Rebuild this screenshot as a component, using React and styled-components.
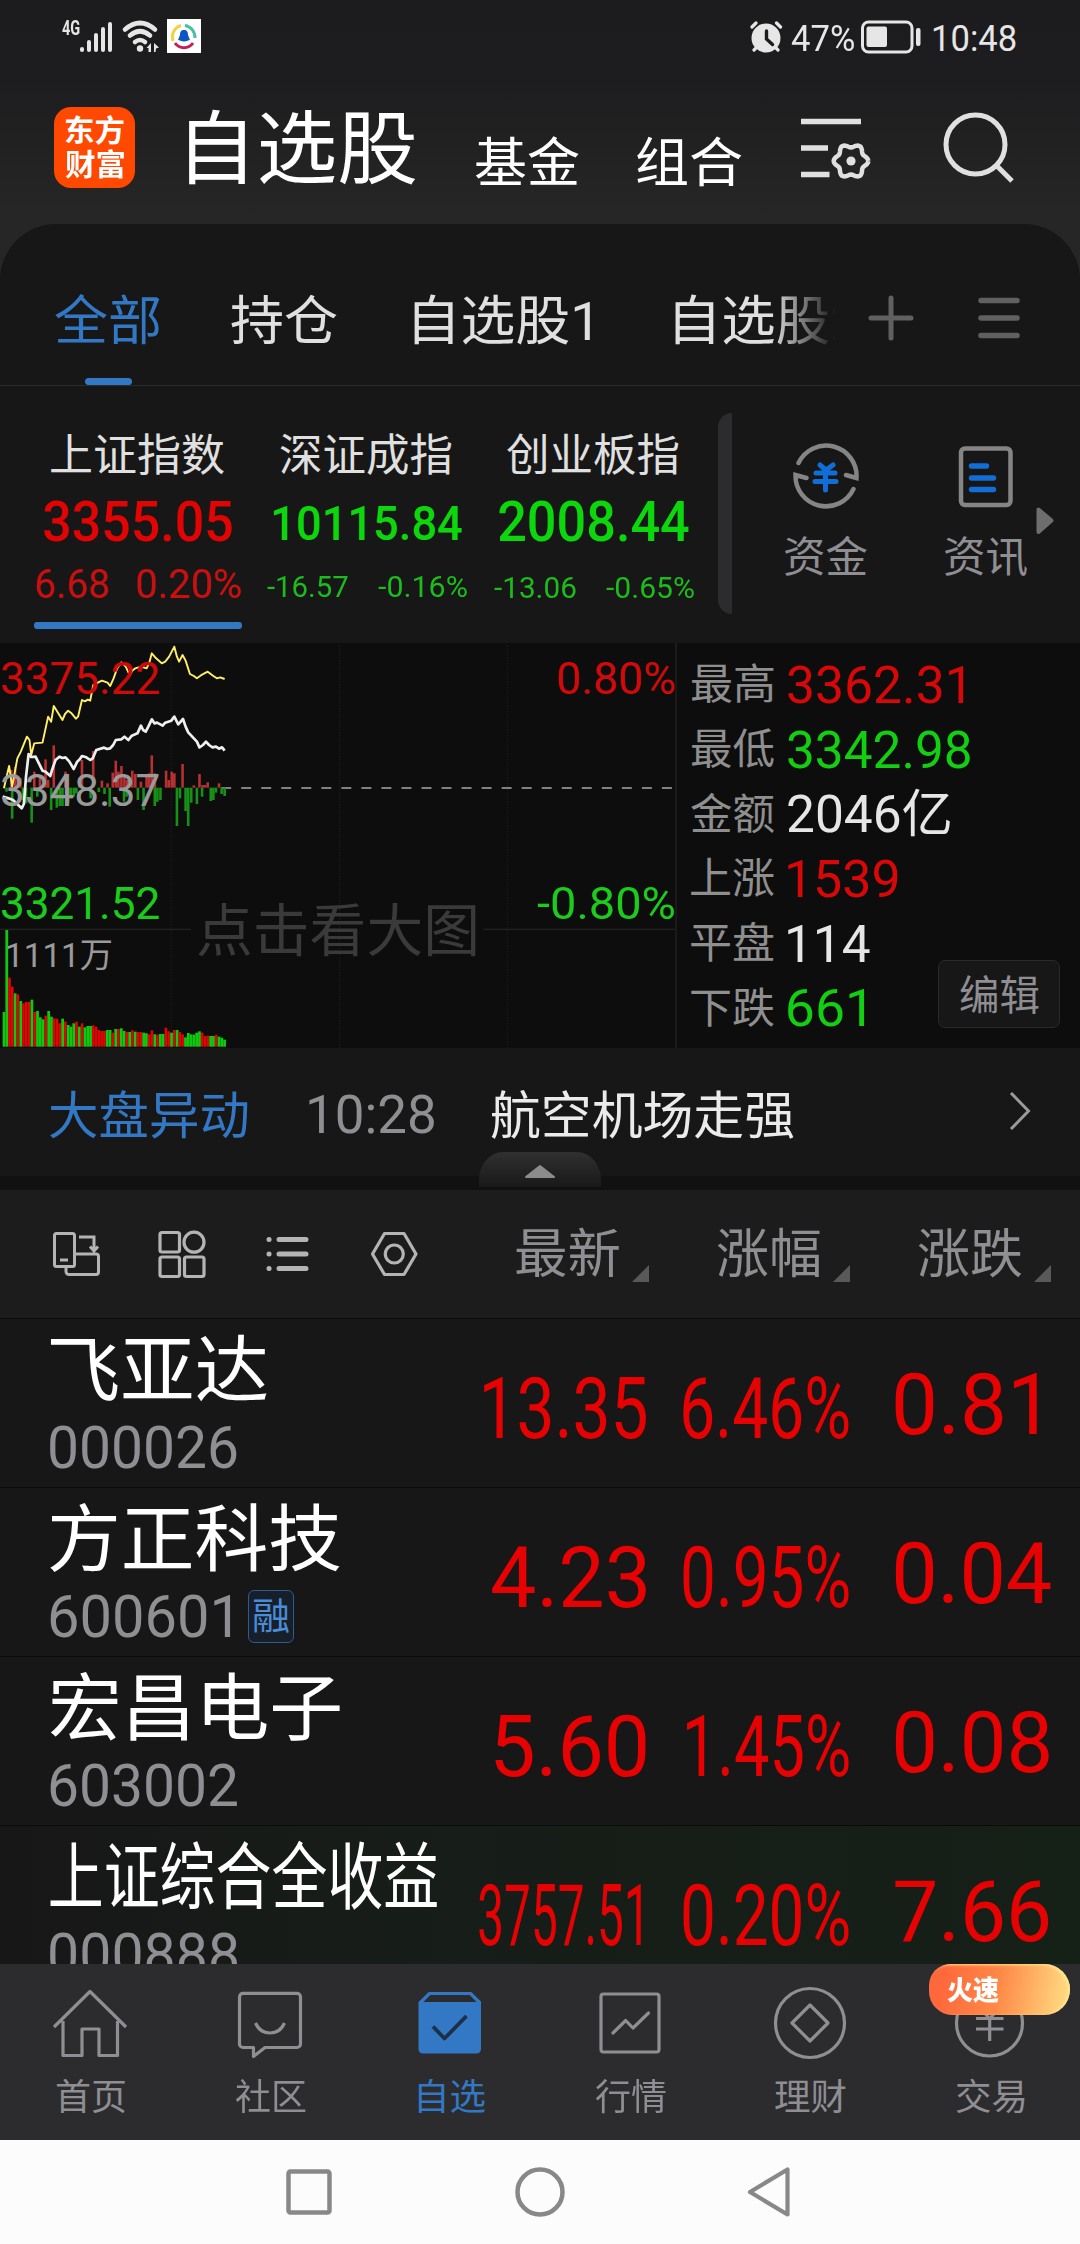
import React, { useLayoutEffect, useState } from "react";
import styled, { createGlobalStyle } from "styled-components";

const FONT = 'Roboto, "Noto Sans CJK SC", sans-serif';
const RED = "#e60202";
const GREEN = "#0cd60c";
const BLUE = "#3278c4";
const MUTED = "#8e8e93";
const LIGHT = "#e0e0e0";

const GlobalStyle = createGlobalStyle`
  * { box-sizing: border-box; }
  body { margin: 0; background: #171717; font-family: ${FONT}; }
`;

/* Text that is condensed or widened so that its ink spans a given width. */
const FitBox = styled.span`
  display: block;
  flex: none;
  width: ${(p) => p.$w}px;
  margin-left: ${(p) => p.$ml || 0}px;
  margin-top: ${(p) => p.$mt || 0}px;
  font-size: ${(p) => p.$size}px;
  font-weight: ${(p) => p.$weight || 400};
  line-height: 1;
  white-space: nowrap;
  color: ${(p) => p.$color || "#fff"};
`;
const FitInner = styled.span`
  display: inline-block;
  transform-origin: 0 0;
  vertical-align: top;
`;

function Fit({ children, w, size, weight = 400, color, ml, mt }) {
  const [transform, setTransform] = useState("none");
  useLayoutEffect(() => {
    const ctx = document.createElement("canvas").getContext("2d");
    ctx.font = `${weight} ${size}px ${FONT}`;
    const m = ctx.measureText(children);
    const scale = w / (m.actualBoundingBoxLeft + m.actualBoundingBoxRight);
    setTransform(`translateX(${m.actualBoundingBoxLeft * scale}px) scaleX(${scale})`);
  }, [children, w, size, weight]);
  return (
    <FitBox $w={w} $size={size} $weight={weight} $color={color} $ml={ml} $mt={mt}>
      <FitInner style={{ transform }}>{children}</FitInner>
    </FitBox>
  );
}

const Glyph = styled.svg`
  display: block;
  flex: none;
  overflow: visible;
  margin-left: ${(p) => p.$ml || 0}px;
  margin-top: ${(p) => p.$mt || 0}px;
  fill: none;
  stroke: ${(p) => p.$stroke || LIGHT};
  stroke-width: ${(p) => p.$sw || 3};
`;

const Screen = styled.div`
  width: 1080px;
  height: 2244px;
  overflow: hidden;
  display: flex;
  flex-direction: column;
  background: #171717;
`;
const Top = styled.div`
  flex: none;
  height: 224px;
  background: linear-gradient(#1c1c1e 0, #1d1d1f 80px, #262626 215px);
`;
const StatusBar = styled.div`
  height: 72px;
  display: flex;
  align-items: flex-start;
`;
const Header = styled.header`
  height: 152px;
  display: flex;
  align-items: flex-start;
`;
const Logo = styled.div`
  flex: none;
  width: 81px;
  height: 81px;
  margin: 35px 0 0 54px;
  padding-top: 9px;
  border-radius: 17px;
  background: #ff4800;
  display: flex;
  flex-direction: column;
  align-items: center;
  gap: 4px;
`;
const AppBadge = styled.div`
  flex: none;
  width: 34px;
  height: 34px;
  margin: 19px 0 0 6px;
  background: #fff;
`;

const TabPanel = styled.div`
  flex: none;
  height: 162px;
  background: #262626;
`;
const Tabs = styled.nav`
  height: 162px;
  display: flex;
  align-items: flex-start;
  background: #171717;
  border-bottom: 1px solid #2b2b2b;
  border-radius: 56px 56px 0 0;
`;
const TabScroller = styled.div`
  flex: none;
  width: 836px;
  height: 161px;
  display: flex;
  align-items: flex-start;
  overflow: hidden;
  mask-image: linear-gradient(to right, #000 calc(100% - 65px), transparent);
`;
const Tab = styled.div`
  flex: none;
  margin-left: ${(p) => p.$ml}px;
  height: 161px;
  display: flex;
  flex-direction: column;
  align-items: center;
`;
const TabMark = styled.i`
  width: 47px;
  height: 7px;
  margin: auto 0 0 2px;
  border-radius: 4px;
  background: ${BLUE};
`;

const Indices = styled.section`
  flex: none;
  height: 257px;
  display: flex;
  align-items: flex-start;
`;
const IndexCard = styled.div`
  flex: none;
  width: ${(p) => p.$w}px;
  margin-left: ${(p) => p.$ml}px;
  padding-top: 47.5px;
  display: flex;
  flex-direction: column;
  align-items: center;
`;
const Changes = styled.div`
  align-self: stretch;
  display: flex;
  justify-content: space-between;
  margin-top: ${(p) => p.$mt}px;
`;
const CardMark = styled.i`
  width: 208px;
  height: 7px;
  margin-top: 16.5px;
  border-radius: 3px;
  background: ${BLUE};
`;
const Handle = styled.i`
  flex: none;
  width: 14px;
  height: 201px;
  margin: 27px 0 0 24px;
  border-radius: 14px 0 0 14px;
  background: #2c2c2e;
`;
const Tool = styled.div`
  flex: none;
  width: 84px;
  margin-left: ${(p) => p.$ml}px;
  padding-top: 57px;
  display: flex;
  flex-direction: column;
  align-items: center;
`;

const Market = styled.section`
  flex: none;
  position: relative;
  height: 405px;
  display: flex;
  background: #0d0d0d;
`;
const Chart = styled.div`
  flex: none;
  position: relative;
  width: 677px;
  height: 405px;
  border-right: 2px solid #1a1a1a;
`;
const ChartSvg = styled.svg`
  display: block;
  fill: none;
`;
const ChartLabel = styled.div`
  position: absolute;
  left: ${(p) => p.$x}px;
  top: ${(p) => p.$y}px;
`;
const Stats = styled.div`
  flex: 1;
  padding: 10px 0 0 14px;
`;
const Stat = styled.div`
  height: 64.7px;
  display: flex;
  align-items: center;
  gap: 14px;
`;
const EditButton = styled.div`
  position: absolute;
  right: 20px;
  bottom: 20px;
  width: 122px;
  height: 68px;
  padding-top: 4px;
  display: flex;
  align-items: center;
  justify-content: center;
  border: 1px solid #2a2a2a;
  border-radius: 7px;
  background: #171717;
`;

const News = styled.section`
  flex: none;
  position: relative;
  height: 142px;
  display: flex;
  align-items: flex-start;
  border-bottom: 14px solid #111;
`;
const Collapse = styled.div`
  position: absolute;
  left: 479px;
  top: 104px;
  width: 122px;
  height: 35px;
  display: flex;
  justify-content: center;
  border-radius: 24px 24px 0 0 / 28px 28px 0 0;
  background: linear-gradient(#303030, #191919);
`;
const Columns = styled.div`
  flex: none;
  height: 129px;
  display: flex;
  align-items: flex-start;
  background: #1c1c1c;
  border-bottom: 1px solid #0c0c0c;
`;

const List = styled.main`
  flex: none;
  height: 645px;
  overflow: hidden;
`;
const Row = styled.div`
  height: 169px;
  display: grid;
  grid-template-columns: 428px 218px 203px 231px;
  border-bottom: 1px solid #0c0c0c;
  background: ${(p) => (p.$tint ? "linear-gradient(90deg, #171717, #171c18 30%, #152017)" : "#171717")};
`;
const NameCell = styled.div`
  padding: 15.5px 0 0 50px;
`;
const CodeLine = styled.div`
  display: flex;
  align-items: flex-start;
  margin-top: 11.5px;
`;
const MarginTag = styled.span`
  flex: none;
  width: 46px;
  height: 53px;
  margin: 2px 0 0 18px;
  padding-top: 8px;
  display: flex;
  justify-content: center;
  border: 1.5px solid #2b5c94;
  border-radius: 6px;
  background: #17202a;
`;
const Cell = styled.div`
  display: flex;
  justify-content: ${(p) => (p.$left ? "flex-start" : "flex-end")};
  align-items: flex-start;
  padding-top: ${(p) => p.$top}px;
  padding-left: ${(p) => p.$left || 0}px;
  padding-right: ${(p) => p.$right || 0}px;
`;

const BottomNav = styled.nav`
  flex: none;
  position: relative;
  height: 176px;
  display: grid;
  grid-template-columns: repeat(6, 180px);
  background: #2c2c2e;
`;
const NavItem = styled.div`
  padding-top: 20px;
  display: flex;
  flex-direction: column;
  align-items: center;
`;
const Promo = styled.div`
  position: absolute;
  left: 929px;
  top: 0;
  width: 141px;
  height: 51px;
  padding: 14px 0 0 18px;
  border-radius: 22px 26px 26px 24px;
  background: linear-gradient(100deg, #ff683c 10%, #ff8a48 50%, #ffd37c 92%);
  box-shadow: inset -3px 1px 3px #ffe48c;
`;
const SystemNav = styled.div`
  flex: none;
  height: 104px;
  display: flex;
  background: #fcfcfc;
`;

const lobes = Array.from({ length: 73 }, (_, i) => {
  const a = (i * Math.PI) / 36;
  const r = 15.4 + 1.9 * Math.cos(6 * a);
  return `${i ? "L" : "M"}${(50 + r * Math.cos(a)).toFixed(2)} ${(43 + r * Math.sin(a)).toFixed(2)}`;
}).join("");

function StatusIcons() {
  return (
    <StatusBar>
      <Fit w={18} size={21} weight={700} color="#e6e6e6" ml={62} mt={18}>4G</Fit>
      <Glyph width="34" height="34" $mt={20} $stroke="#e6e6e6" $sw={4} strokeLinecap="round">
        <path d="M2 29v1M9 22v8M16 15v15M23 9v21M30 4v26" />
      </Glyph>
      <Glyph width="40" height="34" $ml={7} $mt={20} $stroke="#e6e6e6" $sw={4.6} strokeLinecap="round">
        <path d="M4 9.500Q19 -3.500 34 9.500M9 15.500Q19 7 29 15.500M14 22Q19 18 24 22" />
        <circle cx="19" cy="28.500" r="3.200" fill="#e6e6e6" stroke="none" />
        <path d="M30 23v9h-2.500v-4h-2zM33 23l5 4.500-3 1-.5 3.500h-1.500z" fill="#e6e6e6" stroke="none" />
      </Glyph>
      <AppBadge>
        <Glyph width="34" height="34" viewBox="0 0 34 34" $sw={3}>
          <path d="M6 22A12 12 0 0 1 14 6.500" stroke="#f0d24a" />
          <path d="M18 6.500A12 12 0 0 1 28 19" stroke="#48bfa6" />
          <path d="M8 24A11 11 0 0 0 26 24" stroke="#c2205a" />
          <path d="M17 11c-3 0-4 2-4 5l-2 5 2 .5q4 2 8 0l2-.5-2-5c0-3-1-5-4-5z" fill="#0a55c8" stroke="none" />
        </Glyph>
      </AppBadge>
      <Glyph width="33" height="33" $ml={549} $mt={20} $stroke="#e6e6e6" $sw={3.2} strokeLinecap="round">
        <circle cx="16" cy="18" r="14.500" fill="#e6e6e6" stroke="none" />
        <path d="M2 7l4-4M30.500 7l-4-4M6 28l-2 2M26 28l2 2" />
        <path d="M16.500 11v8l6 5.500" stroke="#1c1c1e" strokeWidth="3.400" />
      </Glyph>
      <Fit w={63} size={36} color="#e6e6e6" ml={8} mt={21}>47%</Fit>
      <Glyph width="61" height="34" $ml={7} $mt={20} $stroke="#e6e6e6" $sw={3}>
        <rect x="1.500" y="2" width="49.500" height="30" rx="6" />
        <rect x="5.500" y="6.500" width="20.500" height="20.500" rx="2" fill="#e6e6e6" stroke="none" />
        <rect x="55" y="8" width="4.500" height="18" rx="2" fill="#e6e6e6" stroke="none" />
      </Glyph>
      <Fit w={82} size={36} color="#e6e6e6" ml={12} mt={21}>10:48</Fit>
    </StatusBar>
  );
}

const yellowLine =
  "9,475 21,408 28,470 40,385 48,365 62,320 68,330 72,375 79,340 98,338 111,260 118,275 124,228 144,270 150,252 157,242 165,250 175,266 180,260 189,210 196,214 202,209 208,212 215,165 222,160 235,152 248,158 254,168 262,145 270,115 280,97 290,110 299,135 305,122 312,115 325,110 338,115 344,100 350,70 360,85 373,100 381,95 390,80 402,50 408,80 413,95 421,75 428,92 438,132 447,138 454,145 467,133 479,125 492,138 500,145 508,142 518,147";
const whiteLine =
  "6,500 20,505 30,510 42,525 50,535 55,522 60,440 66,372 72,381 82,380 98,422 105,425 116,438 120,420 128,390 137,380 144,384 151,382 160,395 170,417 178,395 184,388 189,378 199,382 208,390 214,385 222,360 240,353 247,357 254,355 261,345 267,330 280,328 287,320 296,330 304,317 317,310 325,287 330,300 336,305 342,290 350,268 356,280 362,278 375,287 381,278 395,272 402,260 411,283 422,267 428,290 434,307 447,325 454,335 460,352 468,345 475,335 482,345 490,352 498,350 505,356 512,352 518,362";
const risers = [
  [26, 420], [35, 410], [41, 450], [47, 445], [79, 425], [92, 440], [105, 388], [111, 450], [124, 346], [151, 425],
  [183, 445], [189, 390], [215, 363], [235, 452], [248, 460], [260, 428], [267, 392], [273, 425], [280, 408], [287, 440],
  [293, 450], [305, 422], [312, 432], [325, 455], [338, 440], [344, 430], [350, 376], [357, 430], [383, 422], [389, 450],
  [396, 425], [402, 430], [421, 402], [447, 466], [460, 432], [467, 465], [473, 465], [479, 457], [505, 460],
];
const fallers = [
  [15, 485], [28, 566], [53, 510], [60, 520], [73, 578], [86, 500], [118, 540], [131, 533], [138, 528], [144, 528],
  [157, 520], [163, 505], [170, 500], [176, 490], [209, 505], [228, 486], [241, 492], [253, 530], [286, 515], [292, 500],
  [318, 510], [331, 540], [357, 528], [363, 515], [370, 510], [408, 588], [415, 505], [428, 543], [434, 588], [441, 518],
  [454, 522], [466, 500], [486, 513], [492, 510], [498, 488], [511, 492], [518, 498],
];
const volumes =
  "g1146 g900 r1043 r1070 g1090 r1093 g1113 r1120 r1116 r1116 g1109 r1146 g1143 g1162 g1168 r1157 g1143 g1160 r1165 r1166 r1180 g1166 r1175 g1185 g1190 g1180 r1175 g1190 r1180 g1192 g1188 g1188 r1186 r1190 r1200 r1203 r1203 g1200 g1200 r1208 g1197 r1197 g1195 g1203 r1206 g1206 r1201 g1205 r1206 r1206 g1208 g1210 r1213 r1201 g1213 r1214 g1212 g1212 r1193 r1204 g1208 r1200 g1200 r1206 r1213 g1222 g1209 g1213 g1214 g1208 g1204 r1208 r1218 r1217 g1218 g1218 r1214 g1220 g1223 g1229"
    .split(" ")
    .map((v) => ({ up: v[0] === "r", top: Number(v.slice(1)) }));

function MarketChart() {
  return (
    <Chart>
      <ChartSvg width="675" height="405" viewBox="0 39 1556.500 1215" preserveAspectRatio="none">
        {[395, 783, 1170].map((x) => (
          <path key={x} d={`M${x} 46V1254`} stroke="#262626" strokeWidth="2.500" strokeDasharray="3 6" />
        ))}
        <path d="M0 898H440M1115 898H1556" stroke="#2a2a2a" strokeWidth="3" />
        <path d="M510 474H1556" stroke="#a8a8a8" strokeWidth="4.500" strokeDasharray="23 23.200" />
        {risers.map(([x, y]) => <rect key={x} x={x - 3} y={y} width="6" height={473 - y} fill="#b83030" />)}
        {fallers.map(([x, y]) => <rect key={x} x={x - 3} y={473} width="6" height={y - 473} fill="#189018" />)}
        {volumes.map((v, i) => (
          <rect key={i} x={6 + i * 6.440} y={v.top} width={v.up ? 6 : 6.400} height={1250 - v.top} fill={v.up ? "#e00404" : "#10c810"} />
        ))}
        <polyline points={yellowLine} stroke="#fff06a" strokeWidth="1.900" vectorEffect="non-scaling-stroke" strokeLinejoin="round" />
        <polyline points={whiteLine} stroke="#efefef" strokeWidth="2.700" vectorEffect="non-scaling-stroke" strokeLinejoin="round" />
      </ChartSvg>
      <ChartLabel $x={2} $y={12.5}><Fit w={157} size={45} color="#cf0a0a">3375.22</Fit></ChartLabel>
      <ChartLabel $x={558} $y={12.5}><Fit w={116} size={45} color="#cf0a0a">0.80%</Fit></ChartLabel>
      <ChartLabel $x={2} $y={124.5}><Fit w={157} size={45} color="#9a9a9a">3348.37</Fit></ChartLabel>
      <ChartLabel $x={2} $y={237.5}><Fit w={157} size={45} color="#1ccc1c">3321.52</Fit></ChartLabel>
      <ChartLabel $x={537} $y={237.5}><Fit w={137} size={45} color="#1ccc1c">-0.80%</Fit></ChartLabel>
      <ChartLabel $x={7} $y={295}><Fit w={104} size={34} color="#9a9a9a">1111万</Fit></ChartLabel>
      <ChartLabel $x={198} $y={260}><Fit w={278} size={57} color="#3a3a3a">点击看大图</Fit></ChartLabel>
    </Chart>
  );
}

const stats = [
  ["最高", "3362.31", 176, "#d80808"],
  ["最低", "3342.98", 182, "#12cf12"],
  ["金额", "2046亿", 162, "#e6e6e6"],
  ["上涨", "1539", 110, "#d80808"],
  ["平盘", "114", 82, "#e6e6e6"],
  ["下跌", "661", 77, "#12cf12"],
];

const stocks = [
  { name: "飞亚达", nw: 217, code: "000026", cw: 187, price: "13.35", pw: 162, pct: "6.46%", diff: "0.81", dw: 142 },
  { name: "方正科技", nw: 290, code: "600601", cw: 180, tag: true, price: "4.23", pw: 154, pct: "0.95%", diff: "0.04", dw: 156 },
  { name: "宏昌电子", nw: 290, code: "603002", cw: 187, price: "5.60", pw: 151, pct: "1.45%", diff: "0.08", dw: 154 },
  { name: "上证综合全收益", nw: 387, code: "000888", cw: 187, price: "3757.51", pw: 162, pr: 5, pct: "0.20%", diff: "7.66", dw: 154, tint: true },
];

const navItems = [
  { label: "首页", w: 69, icon: <path d="M4 43 40 7.500 76 43M13 37V71.500H32V45H49V71.500H67.500V37" /> },
  {
    label: "社区", w: 71,
    icon: <path d="M13 9.300H67a3.500 3.500 0 0 1 3.500 3.500V60a3.500 3.500 0 0 1-3.500 3.500H35L23.500 72.500V63.500H13A3.500 3.500 0 0 1 9.500 60V12.800A3.500 3.500 0 0 1 13 9.300ZM25.500 39Q30 49 40 49T54.500 39" />,
  },
  {
    label: "自选", w: 67, shift: 2, active: true,
    icon: (
      <>
        <path d="M10 19 19.500 9.500H60.500L70 19" />
        <path d="M8.500 18H71V65a4.500 4.500 0 0 1-4.500 4.500H13A4.500 4.500 0 0 1 8.500 65Z" fill={BLUE} stroke="none" />
        <path d="M23 42.500 34.500 54.500 56.500 32" stroke="#1d3048" strokeWidth="3.800" />
      </>
    ),
  },
  { label: "行情", w: 71, icon: <><rect x="11" y="10" width="58" height="58" rx="2.500" /><path d="M23 49 35.700 36.500 43 44 58.500 29" strokeLinecap="round" /></> },
  { label: "理财", w: 71, icon: <><circle cx="40" cy="39" r="34.500" /><path d="M40 21 58 39 40 57 22 39Z" /></> },
  { label: "交易", w: 69, icon: <><circle cx="39.500" cy="39" r="33" /><path d="M26 34.500H53.500M26 45H53.500M39.700 35V57M29 22 39.700 35 50 22" /></> },
];

export default function App() {
  return (
    <Screen>
      <GlobalStyle />
      <Top>
        <StatusIcons />
        <Header>
          <Logo>
            <Fit w={59} size={30} weight={700}>东方</Fit>
            <Fit w={59} size={30} weight={700}>财富</Fit>
          </Logo>
          <Fit w={227} size={80} ml={54} mt={38}>自选股</Fit>
          <Fit w={104} size={53} ml={59} mt={66}>基金</Fit>
          <Fit w={105} size={53} ml={58} mt={65.5}>组合</Fit>
          <Glyph width="70" height="64" $ml={59} $mt={46} $sw={5.5}>
            <path d="M0 3.500H60M0 30H27M0 56.500H28.500" />
            <path d={lobes} strokeWidth="4.500" strokeLinejoin="round" />
            <circle cx="50" cy="43" r="4.600" fill={LIGHT} stroke="none" />
          </Glyph>
          <Glyph width="70" height="70" $ml={73} $mt={41} $sw={5}>
            <circle cx="31.500" cy="31.500" r="29.500" />
            <path d="M53 53 68 68" />
          </Glyph>
        </Header>
      </Top>

      <TabPanel>
        <Tabs>
          <TabScroller>
            <Tab $ml={55}><Fit w={105} size={53} color={BLUE} mt={72}>全部</Fit><TabMark /></Tab>
            <Tab $ml={71}><Fit w={106} size={53} color={LIGHT} mt={72}>持仓</Fit></Tab>
            <Tab $ml={77}><Fit w={176} size={53} color={LIGHT} mt={72}>自选股1</Fit></Tab>
            <Tab $ml={85}><Fit w={184} size={53} color={LIGHT} mt={72}>自选股2</Fit></Tab>
          </TabScroller>
          <Glyph width="46" height="46" $ml={32} $mt={71} $stroke="#606060" $sw={5} strokeLinecap="round">
            <path d="M3 23H43M23 3V43" />
          </Glyph>
          <Glyph width="42" height="42" $ml={64} $mt={73} $stroke="#606060" $sw={5.5} strokeLinecap="round">
            <path d="M3 3.500H39M3 21H39M3 38.500H39" />
          </Glyph>
        </Tabs>
      </TabPanel>

      <Indices>
        <IndexCard $ml={34} $w={207}>
          <Fit w={173} size={44} color={LIGHT}>上证指数</Fit>
          <Fit w={188} size={56} weight={500} color="#e00404" mt={16.5}>3355.05</Fit>
          <Changes $mt={14}>
            <Fit w={72} size={41} color="#c81010" ml={2}>6.68</Fit>
            <Fit w={104} size={41} color="#c81010">0.20%</Fit>
          </Changes>
          <CardMark />
        </IndexCard>
        <IndexCard $ml={26} $w={200}>
          <Fit w={172} size={44} color={LIGHT} ml={-3}>深证成指</Fit>
          <Fit w={188} size={49} weight={500} color={GREEN} ml={2} mt={21.5}>10115.84</Fit>
          <Changes $mt={24}>
            <Fit w={81} size={30} color="#1cbc1c">-16.57</Fit>
            <Fit w={89} size={30} color="#1cbc1c">-0.16%</Fit>
          </Changes>
        </IndexCard>
        <IndexCard $ml={27} $w={200}>
          <Fit w={172} size={44} color={LIGHT} ml={-3}>创业板指</Fit>
          <Fit w={190} size={56} weight={500} color={GREEN} mt={16.5}>2008.44</Fit>
          <Changes $mt={22.5}>
            <Fit w={82} size={30} color="#1cbc1c">-13.06</Fit>
            <Fit w={88} size={30} color="#1cbc1c">-0.65%</Fit>
          </Changes>
        </IndexCard>
        <Handle />
        <Tool $ml={52}>
          <Glyph width="66" height="66" $stroke="#858585" $sw={4.5} strokeLinecap="round">
            <path d="M5.500 20A30.500 30.500 0 0 1 63.500 35L53 32M60.500 46A30.500 30.500 0 0 1 2.500 32L13.500 35" />
            <path d="M27 22 33 27 40 22M23 30H42M22 38.500H43M32.500 28V47" stroke="#116ed6" strokeWidth="5" />
          </Glyph>
          <Fit w={82} size={42} color={MUTED} mt={27.5}>资金</Fit>
        </Tool>
        <Tool $ml={76}>
          <Glyph width="66" height="66" $stroke="#858585" $sw={4.5} strokeLinecap="round">
            <rect x="8" y="5.500" width="49.500" height="56.500" rx="4" />
            <path d="M18.500 23H33.500M18.500 35H40.500M18.500 46.500H40.500" stroke="#116ed6" strokeWidth="5.500" />
          </Glyph>
          <Fit w={82} size={42} color={MUTED} mt={27.5}>资讯</Fit>
        </Tool>
        <Glyph width="18" height="28" $ml={8} $mt={121} $stroke="#6e6e6e" $sw={4} strokeLinejoin="round">
          <path d="M2.500 2.500V25L15.500 13.500Z" fill="#6e6e6e" />
        </Glyph>
      </Indices>

      <Market>
        <MarketChart />
        <Stats>
          {stats.map(([label, value, w, color]) => (
            <Stat key={label}>
              <Fit w={83} size={42} color="#8f8f8f">{label}</Fit>
              <Fit w={w} size={51} color={color}>{value}</Fit>
            </Stat>
          ))}
        </Stats>
        <EditButton><Fit w={79} size={41} color={MUTED}>编辑</Fit></EditButton>
      </Market>

      <News>
        <Fit w={198} size={51} color={BLUE} ml={50} mt={43}>大盘异动</Fit>
        <Fit w={125} size={53} color={MUTED} ml={61} mt={41}>10:28</Fit>
        <Fit w={303} size={51} color="#ebebeb" ml={57} mt={43}>航空机场走强</Fit>
        <Glyph width="20" height="38" $ml={216} $mt={44} $stroke="#9a9a9a" $sw={3}>
          <path d="M1 1 18.500 19 1 37" />
        </Glyph>
        <Collapse>
          <Glyph width="32" height="14" $mt={12} $stroke="#8c8c8c" $sw={2} strokeLinejoin="round">
            <path d="M2 13H30L16 2Z" fill="#8c8c8c" />
          </Glyph>
        </Collapse>
      </News>

      <Columns>
        <Glyph width="48" height="46" $ml={53} $mt={41} $stroke="#b4b4b4" $sw={3}>
          <rect x="1.500" y="2.500" width="20" height="33" rx="2" />
          <path d="M7 29H15M26 6H41V19M37 15.500 41 20 45 15.500M22 23H43a2.500 2.500 0 0 1 2.500 2.500V41a2.500 2.500 0 0 1-2.500 2.500H16a3 3 0 0 1-3-3V36" />
        </Glyph>
        <Glyph width="48" height="48" $ml={57} $mt={40} $stroke="#b4b4b4" $sw={3.2}>
          <rect x="2" y="2.500" width="19.500" height="19.500" rx="2" />
          <circle cx="36" cy="12.200" r="10" />
          <rect x="2" y="27" width="19.500" height="19.500" rx="2" />
          <rect x="26.500" y="27" width="19.500" height="19.500" rx="2" />
        </Glyph>
        <Glyph width="44" height="40" $ml={60} $mt={43} $stroke="#b4b4b4" $sw={5} strokeLinecap="round">
          <path d="M3 6.500H3.100M13 6.500H40M3 21H3.100M13 21H40M3 35.500H3.100M13 35.500H40" />
        </Glyph>
        <Glyph width="48" height="46" $ml={61} $mt={41} $stroke="#b4b4b4" $sw={3.2} strokeLinejoin="round">
          <path d="M13.500 2.500H33L45 23 33 43.500H13.500L1.500 23Z" />
          <circle cx="23.300" cy="23" r="9" />
        </Glyph>
        <Fit w={103} size={53} color={MUTED} ml={97} mt={39}>最新</Fit>
        <Glyph width="17" height="17" $ml={13} $mt={75} $stroke="none"><path d="M17 0V17H0Z" fill="#59595c" /></Glyph>
        <Fit w={103} size={53} color={MUTED} ml={68} mt={39}>涨幅</Fit>
        <Glyph width="17" height="17" $ml={13} $mt={75} $stroke="none"><path d="M17 0V17H0Z" fill="#59595c" /></Glyph>
        <Fit w={104} size={53} color={MUTED} ml={68} mt={39}>涨跌</Fit>
        <Glyph width="17" height="17" $ml={12} $mt={75} $stroke="none"><path d="M17 0V17H0Z" fill="#59595c" /></Glyph>
      </Columns>

      <List>
        {stocks.map((s) => (
          <Row key={s.code} $tint={s.tint}>
            <NameCell>
              <Fit w={s.nw} size={73}>{s.name}</Fit>
              <CodeLine>
                <Fit w={s.cw} size={59} color={MUTED} mt={-1.5}>{s.code}</Fit>
                {s.tag && <MarginTag><Fit w={36} size={37} color="#4a8cd8">融</Fit></MarginTag>}
              </CodeLine>
            </NameCell>
            <Cell $top={47} $right={s.pr}><Fit w={s.pw} size={86} color={RED}>{s.price}</Fit></Cell>
            <Cell $top={47}><Fit w={s.pct[0] === "1" ? 162 : 166} size={86} color={RED}>{s.pct}</Fit></Cell>
            <Cell $top={42.5} $left={46}><Fit w={s.dw} size={86} color={RED}>{s.diff}</Fit></Cell>
          </Row>
        ))}
      </List>

      <BottomNav>
        {navItems.map((n) => (
          <NavItem key={n.label}>
            <Glyph width="80" height="80" $stroke={n.active ? BLUE : MUTED} $sw={3.2} strokeLinejoin="round">{n.icon}</Glyph>
            <Fit w={n.w} size={36} color={n.active ? BLUE : MUTED} ml={n.shift} mt={15.5}>{n.label}</Fit>
          </NavItem>
        ))}
        <Promo><Fit w={52} size={27} weight={900}>火速</Fit></Promo>
      </BottomNav>

      <SystemNav>
        <Glyph width="46" height="46" $ml={286} $mt={29} $stroke="#888" $sw={4.5}>
          <rect x="2.500" y="2.500" width="41" height="41" rx="2" />
        </Glyph>
        <Glyph width="50" height="50" $ml={183} $mt={27} $stroke="#888" $sw={4.5}>
          <circle cx="25" cy="25" r="22.500" />
        </Glyph>
        <Glyph width="44" height="50" $ml={182} $mt={27} $stroke="#888" $sw={4.2} strokeLinejoin="round">
          <path d="M40.500 2.500V47.500L3 25Z" />
        </Glyph>
      </SystemNav>
    </Screen>
  );
}
